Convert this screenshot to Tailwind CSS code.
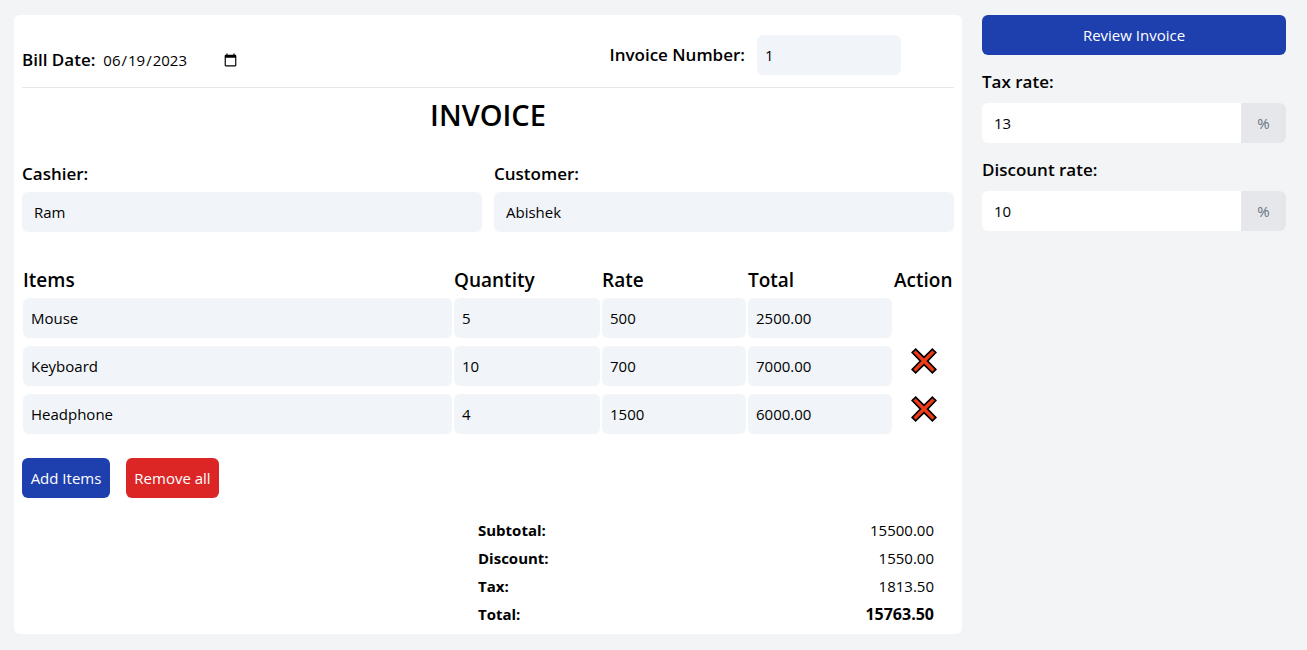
<!DOCTYPE html>
<html lang="en">
<head>
<meta charset="utf-8">
<meta name="viewport" content="width=device-width, initial-scale=1">
<title>Invoice</title>
<script src="https://cdn.jsdelivr.net/npm/@tailwindcss/browser@4"></script>
</head>
<body class="min-h-screen bg-gray-100 font-['Open_Sans','Noto_Sans',sans-serif] text-[15px] leading-6 text-black">
<svg class="hidden" aria-hidden="true">
  <symbol id="cross" viewBox="0 0 26 26">
    <path d="M4.6 1.2 L13 9.4 L21.4 1.2 L24.8 4.6 L16.6 13 L24.8 21.4 L21.4 24.8 L13 16.6 L4.6 24.8 L1.2 21.4 L9.4 13 L1.2 4.6 Z" fill="#f03a17" stroke="#000" stroke-width="1.7" stroke-linejoin="miter"/>
  </symbol>
</svg>
<div class="flex items-start gap-5 pt-[15px] pr-[21px] pb-4 pl-[14px]">
  <main class="min-w-0 flex-1 rounded-md bg-white px-2 pt-5 pb-[6px]">
    <header class="flex items-start justify-between border-b border-gray-200 pb-3">
      <div class="flex items-center gap-[7px] pt-[11px]">
        <label for="date" class="text-[17px] leading-7 font-semibold">Bill Date:</label>
        <input id="date" type="date" value="2023-06-19" class="h-7 w-[138px] bg-transparent">
      </div>
      <div class="mr-[53px] flex items-center gap-3">
        <label for="number" class="text-[17px] leading-7 font-semibold">Invoice Number:</label>
        <input id="number" type="text" value="1" class="h-10 w-36 rounded-md bg-slate-100 px-2">
      </div>
    </header>

    <h1 class="mt-[7px] text-center text-[29px] leading-10 font-semibold">INVOICE</h1>

    <div class="mt-[25px] grid grid-cols-2 gap-3">
      <div>
        <label for="cashier" class="mb-1 block text-[17px] leading-7 font-semibold">Cashier:</label>
        <input id="cashier" type="text" value="Ram" class="h-10 w-full rounded-md bg-slate-100 px-3">
      </div>
      <div>
        <label for="customer" class="mb-1 block text-[17px] leading-7 font-semibold">Customer:</label>
        <input id="customer" type="text" value="Abishek" class="h-10 w-full rounded-md bg-slate-100 px-3">
      </div>
    </div>

    <div class="-mx-px mt-[34px]">
      <table class="w-full table-fixed border-separate border-spacing-x-[2px] border-spacing-y-0">
        <colgroup>
          <col><col class="w-[146px]"><col class="w-36"><col class="w-36"><col class="w-[59px]">
        </colgroup>
        <thead>
          <tr class="text-left text-[19px] leading-7">
            <th class="font-semibold">Items</th>
            <th class="font-semibold">Quantity</th>
            <th class="font-semibold">Rate</th>
            <th class="font-semibold">Total</th>
            <th class="font-semibold">Action</th>
          </tr>
        </thead>
        <tbody>
          <tr>
            <td class="py-1"><input aria-label="Item" value="Mouse" class="block h-10 w-full rounded-md bg-slate-100 px-2"></td>
            <td class="py-1"><input aria-label="Quantity" value="5" class="block h-10 w-full rounded-md bg-slate-100 px-2"></td>
            <td class="py-1"><input aria-label="Rate" value="500" class="block h-10 w-full rounded-md bg-slate-100 px-2"></td>
            <td class="py-1"><input aria-label="Total" value="2500.00" readonly class="block h-10 w-full rounded-md bg-slate-100 px-2"></td>
            <td></td>
          </tr>
          <tr>
            <td class="py-1"><input aria-label="Item" value="Keyboard" class="block h-10 w-full rounded-md bg-slate-100 px-2"></td>
            <td class="py-1"><input aria-label="Quantity" value="10" class="block h-10 w-full rounded-md bg-slate-100 px-2"></td>
            <td class="py-1"><input aria-label="Rate" value="700" class="block h-10 w-full rounded-md bg-slate-100 px-2"></td>
            <td class="py-1"><input aria-label="Total" value="7000.00" readonly class="block h-10 w-full rounded-md bg-slate-100 px-2"></td>
            <td class="pt-[6px] align-top"><button type="button" aria-label="Remove Keyboard" class="mx-auto block"><svg class="size-[26px]"><use href="#cross"/></svg></button></td>
          </tr>
          <tr>
            <td class="py-1"><input aria-label="Item" value="Headphone" class="block h-10 w-full rounded-md bg-slate-100 px-2"></td>
            <td class="py-1"><input aria-label="Quantity" value="4" class="block h-10 w-full rounded-md bg-slate-100 px-2"></td>
            <td class="py-1"><input aria-label="Rate" value="1500" class="block h-10 w-full rounded-md bg-slate-100 px-2"></td>
            <td class="py-1"><input aria-label="Total" value="6000.00" readonly class="block h-10 w-full rounded-md bg-slate-100 px-2"></td>
            <td class="pt-[6px] align-top"><button type="button" aria-label="Remove Headphone" class="mx-auto block"><svg class="size-[26px]"><use href="#cross"/></svg></button></td>
          </tr>
        </tbody>
      </table>
    </div>

    <div class="mt-5 flex gap-4">
      <button type="button" class="h-10 min-w-[88px] rounded-md bg-[#1e40af] px-[7px] text-white">Add Items</button>
      <button type="button" class="h-10 min-w-[93px] rounded-md bg-[#dc2626] px-[7px] text-white">Remove all</button>
    </div>

    <dl class="mt-[18px] ml-auto w-[476px] pr-5 leading-7">
      <div class="flex justify-between"><dt class="font-bold">Subtotal:</dt><dd>15500.00</dd></div>
      <div class="flex justify-between"><dt class="font-bold">Discount:</dt><dd>1550.00</dd></div>
      <div class="flex justify-between"><dt class="font-bold">Tax:</dt><dd>1813.50</dd></div>
      <div class="flex justify-between font-bold"><dt>Total:</dt><dd class="text-base leading-7">15763.50</dd></div>
    </dl>
  </main>

  <aside class="w-[304px] shrink-0">
    <button type="button" class="h-10 w-full rounded-md bg-[#1e40af] text-white">Review Invoice</button>
    <label for="tax" class="mt-[13px] mb-[7px] block text-[17px] leading-7 font-semibold">Tax rate:</label>
    <div class="flex h-10 overflow-hidden rounded-md bg-white">
      <input id="tax" type="text" value="13" class="min-w-0 flex-1 px-3">
      <span class="flex w-[45px] items-center justify-center bg-gray-200 text-gray-500">%</span>
    </div>
    <label for="discount" class="mt-[13px] mb-[7px] block text-[17px] leading-7 font-semibold">Discount rate:</label>
    <div class="flex h-10 overflow-hidden rounded-md bg-white">
      <input id="discount" type="text" value="10" class="min-w-0 flex-1 px-3">
      <span class="flex w-[45px] items-center justify-center bg-gray-200 text-gray-500">%</span>
    </div>
  </aside>
</div>
</body>
</html>
